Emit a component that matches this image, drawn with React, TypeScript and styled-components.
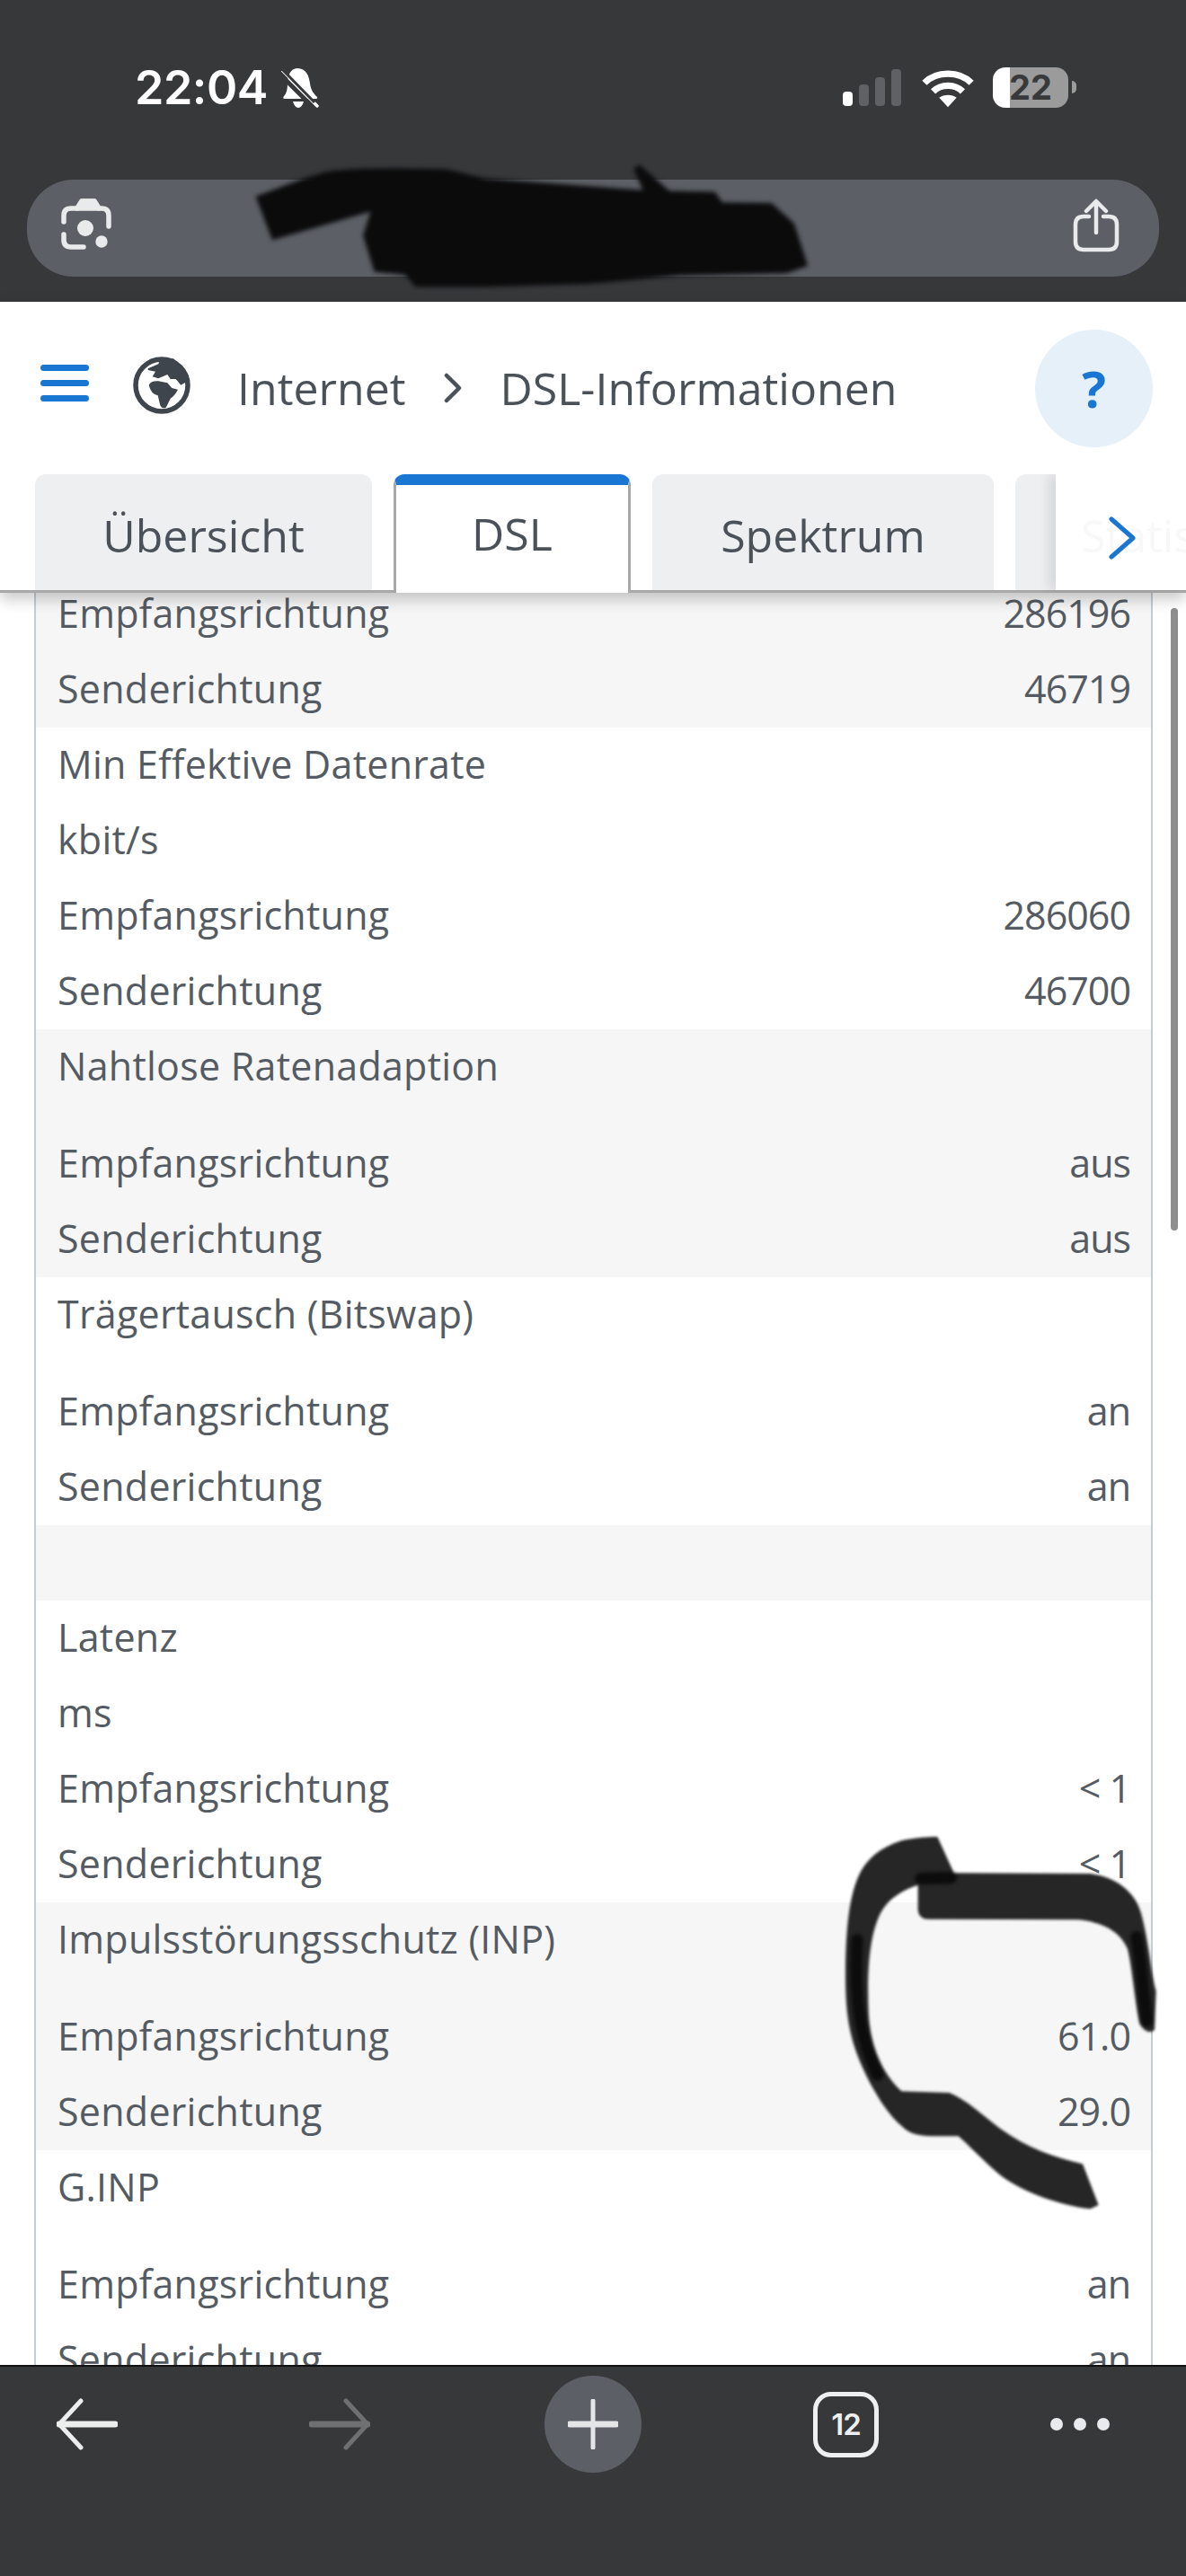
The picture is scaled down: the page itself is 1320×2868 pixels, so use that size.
import React from "react";
import styled, { createGlobalStyle } from "styled-components";

const Global = createGlobalStyle`
  html, body { margin: 0; padding: 0; background: #fff; }
  * { box-sizing: border-box; }
`;

const Page = styled.div`
  position: relative;
  width: 1320px;
  height: 2868px;
  display: flex;
  flex-direction: column;
  overflow: hidden;
  font-family: "Open Sans", "Liberation Sans", sans-serif;
  color: #555b63;
`;

const TopChrome = styled.div`
  flex: 0 0 336px;
  background: #37383a;
  padding-top: 75px;
  display: flex;
  flex-direction: column;
`;

const StatusRow = styled.div`
  height: 45px;
  display: flex;
  align-items: center;
  padding: 0 131px 0 150px;
  color: #fff;
`;

const Clock = styled.span`
  font: 600 52px/45px Inter, "Liberation Sans", sans-serif;
  letter-spacing: -0.5px;
  margin-right: 15px;
`;

const BellIcon = styled.svg`
  width: 42px;
  height: 46px;
`;

const StatusRight = styled.div`
  margin-left: auto;
  display: flex;
  align-items: flex-end;
  height: 45px;
`;

const Signal = styled.div`
  display: flex;
  align-items: flex-end;
  gap: 7px;
  height: 42px;
  margin-right: 23px;
  margin-bottom: 2px;
`;

const SignalBar = styled.span<{ $h: number; $on?: boolean }>`
  width: 11px;
  height: ${(p) => p.$h}px;
  border-radius: 4px;
  background: ${(p) => (p.$on ? "#fff" : "#606164")};
`;

const Battery = styled.div`
  position: relative;
  width: 84px;
  height: 45px;
  margin-left: 21px;
  border-radius: 14px;
  background: linear-gradient(90deg, #fff 0, #fff 19px, #9b9b9c 19px);
  color: #38393b;
  font: 700 38px/45px Inter, "Liberation Sans", sans-serif;
  text-align: center;
  &::after {
    content: "";
    position: absolute;
    right: -9px;
    top: 15px;
    width: 5px;
    height: 14px;
    border-radius: 0 5px 5px 0;
    background: #9b9b9c;
  }
`;

const UrlBar = styled.div`
  margin: 80px 30px 0;
  height: 108px;
  border-radius: 52px;
  background: #5c5f66;
  display: flex;
  align-items: center;
  justify-content: space-between;
  padding: 0 20px;
  color: #e9eaec;
`;

const UrlIcon = styled.svg`
  width: 90px;
  height: 90px;
  fill: none;
  stroke: currentColor;
  stroke-linecap: round;
  stroke-linejoin: round;
`;

const Header = styled.header`
  position: relative;
  z-index: 3;
  flex: 0 0 324px;
  background: #fff;
  border-bottom: 3px solid #a8a8a8;
  box-shadow: 0 7px 16px rgba(0, 0, 0, 0.22);
`;

const Crumbs = styled.div`
  height: 192px;
  display: flex;
  align-items: center;
  padding: 0 37px 0 45px;
  font-size: 50px;
  color: #4b5159;
`;

const Burger = styled.div`
  width: 54px;
  display: flex;
  flex-direction: column;
  gap: 10px;
  margin-right: 49px;
  margin-top: -11px;
`;

const BurgerLine = styled.span`
  height: 7px;
  border-radius: 4px;
  background: #1976d2;
`;

const GlobeIcon = styled.svg`
  width: 64px;
  height: 64px;
  margin-right: 52px;
  margin-top: -6px;
  color: #3f454d;
`;

const CrumbSep = styled.svg`
  width: 22px;
  height: 34px;
  margin: 0 42px 0 41px;
  fill: none;
  stroke: #4b5159;
  stroke-width: 4.5;
  stroke-linecap: round;
  stroke-linejoin: round;
`;

const Help = styled.div`
  margin-left: auto;
  width: 131px;
  height: 131px;
  border-radius: 50%;
  background: #e6f0f8;
  color: #1976d2;
  font: 700 56px/131px "Open Sans", sans-serif;
  text-align: center;
`;

const Tabs = styled.div`
  position: relative;
  height: 132px;
  margin-bottom: -3px;
  display: flex;
  align-items: flex-start;
  gap: 24px;
  padding-left: 39px;
  overflow: hidden;
`;

const Tab = styled.div<{ $w: number; $active?: boolean }>`
  flex: 0 0 ${(p) => p.$w}px;
  height: ${(p) => (p.$active ? 132 : 129)}px;
  border-radius: 12px 12px 0 0;
  background: ${(p) => (p.$active ? "#fff" : "#eeeff1")};
  border: ${(p) => (p.$active ? "3px solid #a8a8a8" : "0")};
  border-top: ${(p) => (p.$active ? "12px solid #1976d2" : "0")};
  border-bottom: 0;
  color: #4b5159;
  font-size: 50px;
  line-height: ${(p) => (p.$active ? 108 : 129)}px;
  padding-top: ${(p) => (p.$active ? 0 : 4)}px;
  text-align: center;
  white-space: nowrap;
  overflow: hidden;
`;

const TabFade = styled.div`
  position: absolute;
  left: 1175px;
  top: 0;
  width: 145px;
  height: 129px;
  background: rgba(255, 255, 255, 0.96);
  box-shadow: -8px 0 12px rgba(0, 0, 0, 0.1);
  display: flex;
  align-items: center;
  padding: 12px 0 0 58px;
`;

const TabArrow = styled.svg`
  width: 32px;
  height: 48px;
  fill: none;
  stroke: #1976d2;
  stroke-width: 5;
  stroke-linecap: round;
  stroke-linejoin: round;
`;

const Content = styled.main`
  position: relative;
  flex: 1;
  min-height: 0;
  overflow: hidden;
`;

const Table = styled.div`
  margin: -18px 37px 0 38px;
  border-left: 2px solid #c4ccd6;
  border-right: 2px solid #c4ccd6;
`;

const Group = styled.div<{ $striped?: boolean }>`
  background: ${(p) => (p.$striped ? "#f5f6f5" : "#fff")};
`;

const Row = styled.div<{ $title?: boolean }>`
  height: ${(p) => (p.$title ? 108 : 84)}px;
  padding: 0 23px 0 24px;
  display: flex;
  justify-content: space-between;
  font-size: 43px;
  letter-spacing: 0.25px;
  line-height: 82px;
  white-space: nowrap;
`;

const Value = styled.span`
  letter-spacing: -1px;
`;

const Scrollbar = styled.div`
  position: absolute;
  left: 1303px;
  top: 17px;
  width: 8px;
  height: 693px;
  border-radius: 4px;
  background: #8e8e8e;
`;

const BottomBar = styled.nav`
  flex: 0 0 235px;
  background: #37383a;
  border-top: 2px solid #111;
  padding: 10px 0 0 63px;
  display: grid;
  grid-template-columns: 281px 262px 299px 264px auto;
  grid-template-rows: 108px;
  align-items: center;
  justify-items: start;
`;

const NavIcon = styled.svg<{ $dim?: boolean }>`
  width: 68px;
  height: 58px;
  fill: none;
  stroke: ${(p) => (p.$dim ? "#6f7072" : "#eceded")};
  stroke-width: 5;
  stroke-linecap: round;
  stroke-linejoin: round;
`;

const PlusButton = styled.div`
  width: 108px;
  height: 108px;
  border-radius: 50%;
  background: #5c5f66;
  display: flex;
  align-items: center;
  justify-content: center;
`;

const PlusIcon = styled.svg`
  width: 56px;
  height: 56px;
  stroke: #e4e5e7;
  stroke-linecap: round;
`;

const TabCount = styled.div`
  width: 73px;
  height: 73px;
  border: 5px solid #eeeff1;
  border-radius: 20px;
  color: #eeeff1;
  font: 600 33px/63px Inter, "Liberation Sans", sans-serif;
  text-align: center;
  letter-spacing: -1px;
`;

const Dots = styled.div`
  display: flex;
  gap: 12px;
`;

const Dot = styled.span`
  width: 14px;
  height: 14px;
  border-radius: 50%;
  background: #e9eaee;
`;

const Redaction = styled.svg`
  position: absolute;
  left: 0;
  top: 0;
  width: 1320px;
  height: 340px;
  z-index: 5;
  filter: blur(2.5px);
`;

const Scribble = styled.svg`
  position: absolute;
  left: 880px;
  top: 2000px;
  width: 440px;
  height: 500px;
  z-index: 2;
  filter: blur(1.8px);
`;

const ScribbleCore = styled.path`
  fill: none;
  stroke: #0c0c0c;
  stroke-width: 40;
  stroke-linecap: round;
  filter: blur(5px);
`;

type R = [string, string?];
type G = { striped?: boolean; title?: string; rows: R[] };

const E = "Empfangsrichtung";
const S = "Senderichtung";

const groups: G[] = [
  { striped: true, rows: [[E, "286196"], [S, "46719"]] },
  { rows: [["Min Effektive Datenrate"], ["kbit/s"], [E, "286060"], [S, "46700"]] },
  { striped: true, title: "Nahtlose Ratenadaption", rows: [[E, "aus"], [S, "aus"]] },
  { title: "Trägertausch (Bitswap)", rows: [[E, "an"], [S, "an"]] },
  { striped: true, rows: [[""]] },
  { rows: [["Latenz"], ["ms"], [E, "< 1"], [S, "< 1"]] },
  { striped: true, title: "Impulsstörungsschutz (INP)", rows: [[E, "61.0"], [S, "29.0"]] },
  { title: "G.INP", rows: [[E, "an"], [S, "an"]] },
];

export default function App() {
  return (
    <Page>
      <Global />
      <TopChrome>
        <StatusRow>
          <Clock>22:04</Clock>
          <BellIcon viewBox="0 0 42 46">
            <path fill="#fff" d="M18 1C28 1 31 10 32 18C33 26 37 30 40 33Q41 35 38 35L4 35Q1 35 3 32C6 29 7 24 7 18C7 10 10 1 18 1Z" />
            <path fill="#fff" d="M13 38H25Q23 45 19 45Q15 45 13 38Z" />
            <path d="M-1 8L36 45" stroke="#37383a" strokeWidth="5" />
            <path d="M1 3L40 43" stroke="#fff" strokeWidth="3.4" strokeLinecap="round" />
            <path d="M-2 -1L37 39" stroke="#37383a" strokeWidth="3" />
          </BellIcon>
          <StatusRight>
            <Signal>
              <SignalBar $h={16} $on />
              <SignalBar $h={24} />
              <SignalBar $h={32} />
              <SignalBar $h={41} />
            </Signal>
            <svg width="58" height="44" viewBox="0 0 60 44" fill="none" stroke="#fff" strokeWidth="7.5">
              <path d="M3 16C17 2 43 2 57 16" />
              <path d="M13 26C22 17 38 17 47 26" />
              <path d="M30 44L20 33C25 29 35 29 40 33Z" fill="#fff" stroke="none" />
            </svg>
            <Battery>22</Battery>
          </StatusRight>
        </StatusRow>
        <UrlBar>
          <UrlIcon viewBox="0 0 90 90" strokeWidth="5.5">
            <path d="M21 38V31Q21 23 29 23H36L41 15H55L60 23H63Q71 23 71 31V43" />
            <path d="M36 23L41 15H55L60 23Z" fill="currentColor" />
            <path d="M21 52V58Q21 66 29 66H43" />
            <circle cx="45" cy="45" r="9" fill="currentColor" stroke="none" />
            <circle cx="63" cy="60" r="6.7" fill="currentColor" stroke="none" />
          </UrlIcon>
          <UrlIcon viewBox="0 0 90 90" strokeWidth="4.5">
            <path d="M32 32H26Q17 32 17 41V60Q17 69 26 69H54Q63 69 63 60V41Q63 32 54 32H48" />
            <path d="M40 50V16M29 26L40 15L51 26" />
          </UrlIcon>
        </UrlBar>
      </TopChrome>

      <Header>
        <Crumbs>
          <Burger>
            <BurgerLine />
            <BurgerLine />
            <BurgerLine />
          </Burger>
          <GlobeIcon viewBox="0 0 64 64" fill="currentColor">
            <circle cx="32" cy="32" r="29" fill="#fff" stroke="currentColor" strokeWidth="5.5" />
            <path d="M17.7 31.7Q20 26.7 28.3 27.3L38.3 29.3L43.3 35L50 36.7Q46.7 43.3 41.7 46.7L36.7 56.7Q31.7 59 30 53.3L27.7 43.3Q20 41.7 17.7 31.7Z" />
            <path d="M16.7 13.3L28.3 8.3L30 3.3L45 2.3L56.7 13.3L61.7 26.7L53.3 31.7L47.7 25H41.7L38.3 20L28.3 24.3L21.7 22.3L25 16.7L16.7 15Z" />
          </GlobeIcon>
          <span>Internet</span>
          <CrumbSep viewBox="0 0 22 34">
            <path d="M4 3L18 17L4 31" />
          </CrumbSep>
          <span>DSL-Informationen</span>
          <Help>?</Help>
        </Crumbs>
        <Tabs>
          <Tab $w={375}>Übersicht</Tab>
          <Tab $w={264} $active>DSL</Tab>
          <Tab $w={380}>Spektrum</Tab>
          <Tab $w={330}>Statistik</Tab>
          <TabFade>
            <TabArrow viewBox="0 0 32 48">
              <path d="M4 3L28 24L4 45" />
            </TabArrow>
          </TabFade>
        </Tabs>
      </Header>

      <Content>
        <Table>
          {groups.map((g, i) => (
            <Group key={i} $striped={g.striped}>
              {g.title && (
                <Row $title>
                  <span>{g.title}</span>
                </Row>
              )}
              {g.rows.map((r, j) => (
                <Row key={j}>
                  <span>{r[0]}</span>
                  {r[1] && <Value>{r[1]}</Value>}
                </Row>
              ))}
            </Group>
          ))}
        </Table>
        <Scrollbar />
      </Content>

      <BottomBar>
        <NavIcon viewBox="0 0 68 58">
          <path d="M3 29H65" strokeWidth="7" />
          <path d="M27 3L3 29L27 55" />
        </NavIcon>
        <NavIcon $dim viewBox="0 0 68 58">
          <path d="M3 29H65" strokeWidth="7" />
          <path d="M41 3L65 29L41 55" />
        </NavIcon>
        <PlusButton>
          <PlusIcon viewBox="0 0 56 56">
            <path d="M2 28H54" strokeWidth="7" />
            <path d="M28 2V54" strokeWidth="5" />
          </PlusIcon>
        </PlusButton>
        <TabCount>12</TabCount>
        <Dots>
          <Dot />
          <Dot />
          <Dot />
        </Dots>
      </BottomBar>

      <Redaction viewBox="0 0 1568 1011" preserveAspectRatio="none">
        <path
          fill="#0b0b0c"
          d="M338 650C370 620 400 590 430 570Q460 552 590 560L640 590L850 630L838 560L845 545L885 632L945 635L955 670L1020 672L1050 740L1068 880L1040 905L900 912L780 940L640 950L550 950L535 910L495 900L480 780L490 700L360 795Z"
        />
      </Redaction>
      <Scribble viewBox="0 0 1320 1500">
        <path
          fill="#262626"
          d="M490 135C450 135 400 140 370 148C300 170 250 210 225 270C195 340 183 450 183 600C183 720 195 790 225 870C260 960 320 1060 370 1100C400 1130 430 1135 480 1135L560 1135C600 1170 640 1215 700 1265C780 1325 900 1365 1000 1378L1028 1365L975 1228C880 1205 790 1175 700 1110C640 1065 590 1015 530 990L370 985C310 930 265 840 260 720C255 600 260 470 300 390C325 340 380 310 425 296L425 380Q428 410 460 410L960 412C1040 420 1100 450 1125 510C1140 570 1150 690 1165 760Q1190 800 1215 780L1220 650C1205 600 1195 480 1170 390C1150 320 1090 270 1000 258L545 256L490 135Z"
        />
        <ScribbleCore d="M222 480C212 640 225 800 290 930M1155 470C1170 550 1175 640 1190 750M435 275L535 272" />
      </Scribble>
    </Page>
  );
}
